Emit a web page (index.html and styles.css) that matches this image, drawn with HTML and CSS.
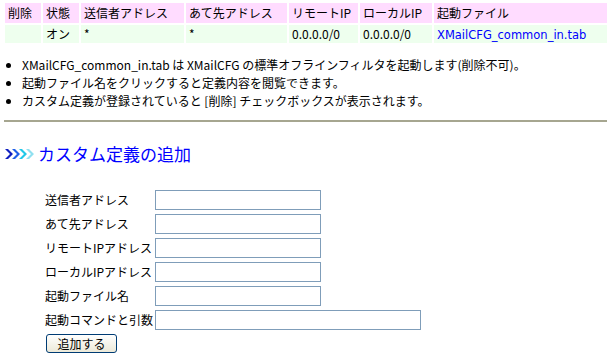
FILE: index.html
```html
<!DOCTYPE html>
<html lang="ja">
<head>
<meta charset="utf-8">
<link rel="stylesheet" href="styles.css">
</head>
<body>
<table class="list">
  <colgroup>
    <col class="c1"><col class="c2"><col class="c3"><col class="c4"><col class="c5"><col class="c6"><col class="c7">
  </colgroup>
  <tr class="head">
    <th>削除</th><th>状態</th><th>送信者アドレス</th><th>あて先アドレス</th><th>リモートIP</th><th>ローカルIP</th><th>起動ファイル</th>
  </tr>
  <tr class="row">
    <td></td><td>オン</td><td>*</td><td>*</td><td>0.0.0.0/0</td><td>0.0.0.0/0</td><td><a href="#">XMailCFG_common_in.tab</a></td>
  </tr>
</table>
<ul class="notes">
  <li>XMailCFG_common_in.tab は XMailCFG の標準オフラインフィルタを起動します(削除不可)。</li>
  <li>起動ファイル名をクリックすると定義内容を閲覧できます。</li>
  <li>カスタム定義が登録されていると [削除] チェックボックスが表示されます。</li>
</ul>
<hr class="sep">
<h2 class="title">
  <svg class="chev" width="31" height="12" viewBox="0 0 31 12">
    <path d="M1 1 L6 6 L1 11 L4 11 L9 6 L4 1 Z" fill="#1020c0"/>
    <path d="M8 1 L13 6 L8 11 L11 11 L16 6 L11 1 Z" fill="#2060e8"/>
    <path d="M15 1 L20 6 L15 11 L18 11 L23 6 L18 1 Z" fill="#20c8e8"/>
    <path d="M22 1 L27 6 L22 11 L25 11 L30 6 L25 1 Z" fill="#90e0f0"/>
  </svg><span>カスタム定義の追加</span>
</h2>
<form class="form">
  <label>送信者アドレス</label><input type="text" class="f">
  <label>あて先アドレス</label><input type="text" class="f">
  <label>リモートIPアドレス</label><input type="text" class="f">
  <label>ローカルIPアドレス</label><input type="text" class="f">
  <label>起動ファイル名</label><input type="text" class="f">
  <label>起動コマンドと引数</label><input type="text" class="f wide">
  <button type="button" class="btn">追加する</button>
</form>
</body>
</html>
```
FILE: styles.css
```css
body {
  margin: 0;
  padding: 1px 3px 0 3px;
  font-family: "Noto Sans CJK JP", "DejaVu Sans", sans-serif;
  font-size: 12px;
  color: #000;
  background: #fff;
}
.list {
  border-collapse: separate;
  border-spacing: 2px;
  table-layout: fixed;
  width: 606px;
}
.c1 { width: 36px; }
.c2 { width: 36px; }
.c3 { width: 103px; }
.c4 { width: 101px; }
.c5 { width: 69px; }
.c6 { width: 72px; }
.c7 { width: auto; }
.list th, .list td {
  text-align: left;
  font-weight: normal;
  padding: 0 3px;
  white-space: nowrap;
  line-height: 16px;
}
.head th {
  background: #ffdcff;
  height: 20px;
}
.row td {
  background: #eeffee;
  height: 18px;
}
.list a {
  color: #0000ff;
  text-decoration: none;
  font-family: "DejaVu Sans", sans-serif;
  font-size: 11.5px;
}
.notes {
  margin: 11px 0 0 0;
  padding-left: 19px;
  list-style: disc;
}
.notes li {
  height: 18px;
  line-height: 18px;
  padding-left: 0;
}
.sep {
  margin: 10px 0 0 1px;
  border: 0;
  border-top: 2px solid #a6a690;
  width: 603px;
  height: 0;
}
.title {
  margin: 21px 0 0 1px;
  font-weight: normal;
  font-size: 17px;
  color: #0000ff;
  display: flex;
  align-items: center;
  gap: 3px;
  line-height: 22px;
}
.chev { display: block; }
.form {
  margin: 25px 0 0 42px;
  display: grid;
  grid-template-columns: 110px auto;
  row-gap: 4px;
  align-items: center;
  justify-items: start;
}
.form label { line-height: 20px; }
.f {
  box-sizing: border-box;
  width: 166px;
  height: 20px;
  border: 1px solid #7f9db9;
  padding: 0 2px;
  margin: 0;
  font-size: 12px;
}
.f.wide { width: 266px; }
.btn {
  grid-column: 1 / 2;
  margin-left: 1px;
  margin-top: 0;
  box-sizing: border-box;
  width: 71px;
  height: 19px;
  border: 1px solid #003c74;
  border-radius: 3px;
  background: linear-gradient(#ffffff, #ece9d8);
  font-family: "Noto Sans CJK JP", sans-serif;
  font-size: 12px;
  line-height: 15px;
  padding: 0;
  color: #000;
}
```
